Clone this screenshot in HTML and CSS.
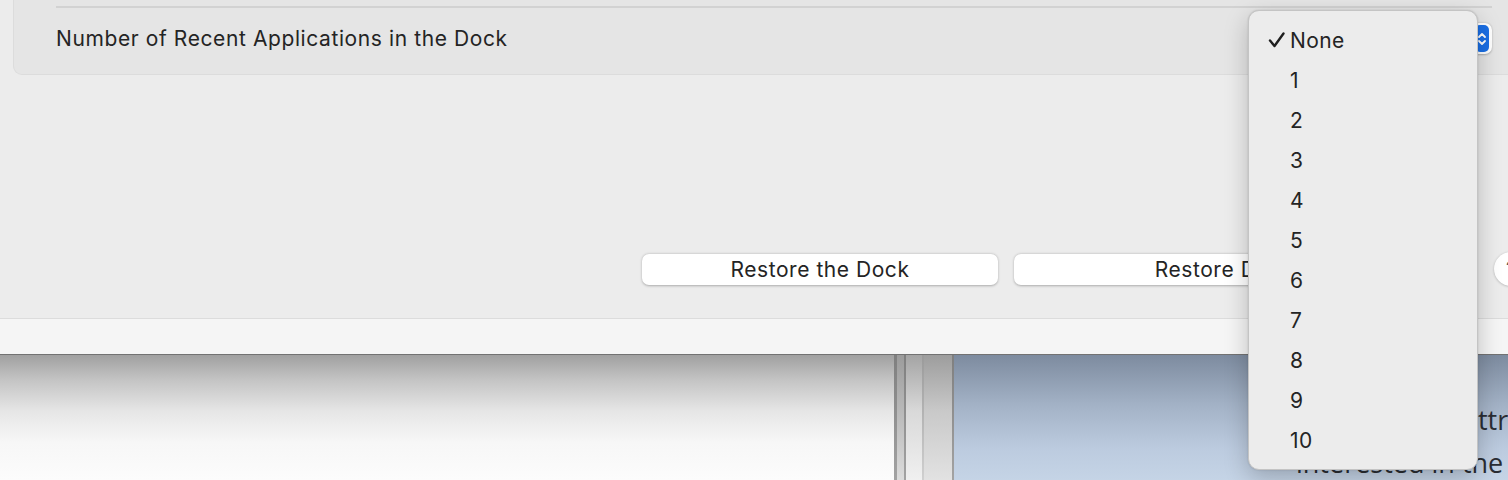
FILE: index.html
```html
<!DOCTYPE html>
<html lang="en">
<head>
<meta charset="utf-8">
<title>Dock Settings</title>
<link rel="stylesheet" href="styles.css">
</head>
<body>
<div class="page">
  <section class="settings">
    <div class="group">
      <div class="divider"></div>
      <div class="row">
        <span class="label">Number of Recent Applications in the Dock</span>
        <div class="popup">
          <span class="popup-value">None</span>
          <span class="popup-arrows">
            <svg width="10" height="16" viewBox="0 0 10 16"><path d="M2 6 L5 3 L8 6 M2 10 L5 13 L8 10" fill="none" stroke="#fff" stroke-width="1.8" stroke-linecap="round" stroke-linejoin="round"/></svg>
          </span>
        </div>
      </div>
    </div>
    <div class="actions">
      <button class="btn btn-dock">Restore the Dock</button>
      <button class="btn btn-defaults">Restore Defaults</button>
      <button class="help">?</button>
    </div>
  </section>
  <div class="toolbar"></div>
  <section class="content">
    <div class="pane-left"></div>
    <div class="splitter">
      <span class="bar dark"></span>
      <span class="bar mid"></span>
      <span class="bar dark thin"></span>
      <span class="bar light"></span>
      <span class="bar line"></span>
      <span class="bar light wide"></span>
      <span class="bar dark thin"></span>
    </div>
    <div class="pane-right">
      <p class="copy"><span class="l1">to attract people</span><br><span class="l2">interested in the Mac</span></p>
    </div>
  </section>

  <ul class="menu">
    <li class="item checked"><span class="check"><svg width="18" height="18" viewBox="0 0 18 18"><path d="M2 9.5 L6.5 15 L15.5 2.5" fill="none" stroke="#1f1f1f" stroke-width="2.4" stroke-linecap="round" stroke-linejoin="round"/></svg></span>None</li>
    <li class="item"><span class="check"></span>1</li>
    <li class="item"><span class="check"></span>2</li>
    <li class="item"><span class="check"></span>3</li>
    <li class="item"><span class="check"></span>4</li>
    <li class="item"><span class="check"></span>5</li>
    <li class="item"><span class="check"></span>6</li>
    <li class="item"><span class="check"></span>7</li>
    <li class="item"><span class="check"></span>8</li>
    <li class="item"><span class="check"></span>9</li>
    <li class="item"><span class="check"></span>10</li>
  </ul>
</div>
</body>
</html>
```
FILE: styles.css
```css
* { box-sizing: border-box; }
html, body { margin: 0; padding: 0; }
body {
  width: 1508px;
  height: 480px;
  overflow: hidden;
  font-family: Inter, "Liberation Sans", sans-serif;
  color: #242424;
  background: #ececec;
}
.page { position: relative; width: 1508px; height: 480px; overflow: hidden; }

.settings {
  height: 318px;
  background: #ececec;
  display: flex;
  flex-direction: column;
}
.group {
  margin-left: 13px;
  margin-right: -30px;
  height: 75px;
  flex: none;
  background: #e5e5e5;
  border: 1px solid #dcdcdc;
  border-top: none;
  border-radius: 0 0 9px 9px;
  padding: 6px 45px 0 42px;
}
.divider { height: 2px; background: #d2d2d2; }
.row {
  height: 66px;
  display: flex;
  align-items: center;
  justify-content: space-between;
  padding-bottom: 5px;
}
.label { font-size: 21px; letter-spacing: 0.6px; }
.popup {
  width: 180px;
  height: 31px;
  background: #fff;
  border-radius: 7px;
  box-shadow: 0 0.5px 2px rgba(0,0,0,0.25);
  display: flex;
  align-items: center;
  justify-content: space-between;
  padding: 2px 3px 2px 12px;
  font-size: 20px;
}
.popup-arrows {
  width: 14px;
  height: 27px;
  background: #1a6fe6;
  border-radius: 5px;
  display: flex;
  align-items: center;
  justify-content: center;
}

.actions {
  margin-top: 177px;
  display: flex;
  align-items: center;
  padding-left: 642px;
}
.btn {
  flex: none;
  height: 31px;
  background: #fff;
  border: none;
  border-radius: 7px;
  box-shadow: 0 0.5px 2.5px rgba(0,0,0,0.28);
  font-family: Inter, "Liberation Sans", sans-serif;
  font-size: 21px;
  letter-spacing: 0.55px;
  color: #242424;
  padding: 0;
  white-space: nowrap;
  overflow: hidden;
}
.btn-dock { width: 356px; }
.btn-defaults { width: 454px; margin-left: 16px; }
.help {
  width: 34px;
  height: 34px;
  margin-left: 26px;
  flex: none;
  border: none;
  border-radius: 50%;
  background: #fff;
  box-shadow: 0 0.5px 2.5px rgba(0,0,0,0.25);
  font-family: Inter, sans-serif;
  font-size: 20px;
  color: #555;
  padding: 0;
}

.toolbar {
  height: 37px;
  background: #f5f5f5;
  border-top: 1px solid #dcdcdc;
  border-bottom: 1px solid #727272;
}

.content {
  height: 125px;
  display: flex;
}
.pane-left {
  width: 894px;
  background: linear-gradient(#a0a0a0 0%, #c4c4c4 20%, #e6e6e6 45%, #f7f7f7 70%, #fcfcfc 100%);
}
.splitter { display: flex; width: 60px; }
.bar { display: block; }
.bar.dark { width: 3px; background: linear-gradient(#7f7f7f, #a3a3a3); }
.bar.dark.thin { width: 2px; }
.bar.mid { width: 7px; background: linear-gradient(#9c9c9c, #dcdcdc); }
.bar.light { width: 16px; background: linear-gradient(#a4a4a4 0%, #d9d9d9 45%, #f0f0f0 100%); }
.bar.line { width: 2px; background: linear-gradient(#9a9a9a, #d0d0d0); }
.bar.light.wide { width: 28px; background: linear-gradient(#9d9d9d 0%, #c9c9c9 45%, #e2e2e2 100%); }

.pane-right {
  flex: 1;
  background: linear-gradient(#7d8b9f 0%, #a3b2c6 40%, #bccbdf 75%, #c5d4e6 100%);
  padding: 43px 0 0 342px;
  overflow: hidden;
}
.copy {
  margin: 0;
  font-family: "Open Sans", sans-serif;
  font-size: 27px;
  line-height: 43px;
  color: #2a2d33;
  white-space: nowrap;
}
.l1 { margin-left: 134px; }

.menu {
  position: absolute;
  left: 1248px;
  top: 10px;
  width: 230px;
  margin: 0;
  padding: 9px 0;
  list-style: none;
  background: #ececec;
  border: 1px solid #c4c4c4;
  border-radius: 11px;
  box-shadow: 0 8px 24px rgba(0,0,0,0.22), 0 0 2px rgba(0,0,0,0.15);
}
.item {
  height: 40px;
  display: flex;
  align-items: center;
  padding-left: 19px;
  font-size: 21px;
  letter-spacing: 0.4px;
  color: #242424;
}
.check {
  width: 22px;
  display: flex;
  align-items: center;
}
```
